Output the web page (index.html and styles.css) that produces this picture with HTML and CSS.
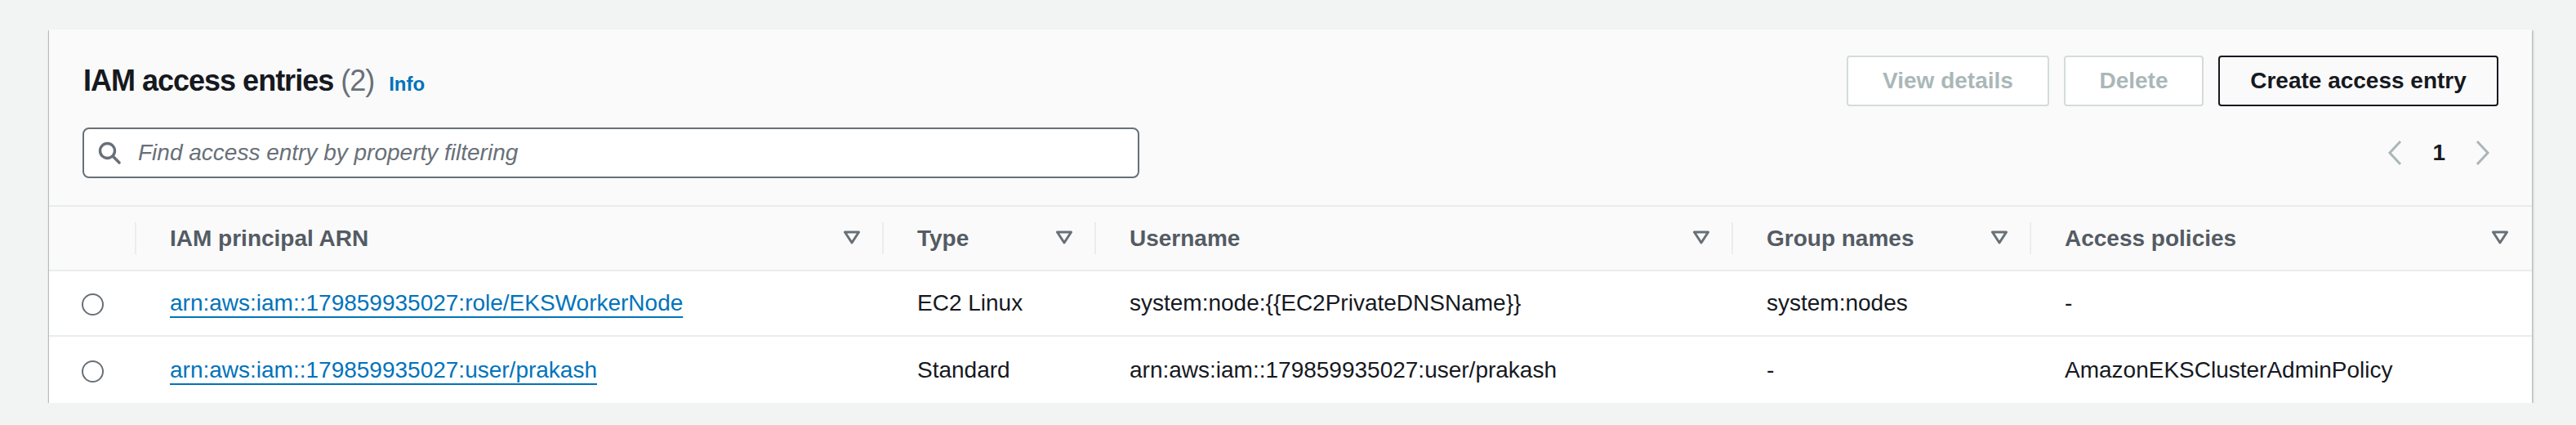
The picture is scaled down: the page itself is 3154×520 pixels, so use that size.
FILE: index.html
```html
<!DOCTYPE html>
<html lang="en">
<head>
<meta charset="utf-8">
<title>IAM access entries</title>
<link rel="stylesheet" href="styles.css">
</head>
<body>
<div class="container">
  <div class="header">
    <div class="header-top">
      <h2 class="title">IAM access entries <span class="count">(2)</span><a class="info" href="#">Info</a></h2>
      <div class="actions">
        <button class="btn btn-view" disabled>View details</button>
        <button class="btn btn-delete" disabled>Delete</button>
        <button class="btn btn-create">Create access entry</button>
      </div>
    </div>
    <div class="header-bottom">
      <div class="search">
        <svg class="search-icon" width="30" height="30" viewBox="0 0 30 30"><circle cx="12.5" cy="12.5" r="9" fill="none" stroke="#687078" stroke-width="3.4"/><line x1="19" y1="19" x2="27" y2="27" stroke="#687078" stroke-width="3.6" stroke-linecap="round"/></svg>
        <span class="placeholder">Find access entry by property filtering</span>
      </div>
      <div class="pagination">
        <svg class="chev" width="18" height="32" viewBox="0 0 18 32"><polyline points="16,2 3,16 16,30" fill="none" stroke="#aab7b8" stroke-width="3"/></svg>
        <span class="page">1</span>
        <svg class="chev" width="18" height="32" viewBox="0 0 18 32"><polyline points="2,2 15,16 2,30" fill="none" stroke="#aab7b8" stroke-width="3"/></svg>
      </div>
    </div>
  </div>
  <table class="table">
    <colgroup>
      <col class="c0"><col class="c1"><col class="c2"><col class="c3"><col class="c4"><col class="c5">
    </colgroup>
    <thead>
      <tr>
        <th class="th-select"></th>
        <th><div class="th-inner"><span>IAM principal ARN</span><svg class="filter" width="22" height="17" viewBox="0 0 22 17"><polygon points="2.5,2 19.5,2 11,15" fill="none" stroke="#687078" stroke-width="3" stroke-linejoin="round"/></svg></div></th>
        <th><div class="th-inner"><span>Type</span><svg class="filter" width="22" height="17" viewBox="0 0 22 17"><polygon points="2.5,2 19.5,2 11,15" fill="none" stroke="#687078" stroke-width="3" stroke-linejoin="round"/></svg></div></th>
        <th><div class="th-inner"><span>Username</span><svg class="filter" width="22" height="17" viewBox="0 0 22 17"><polygon points="2.5,2 19.5,2 11,15" fill="none" stroke="#687078" stroke-width="3" stroke-linejoin="round"/></svg></div></th>
        <th><div class="th-inner"><span>Group names</span><svg class="filter" width="22" height="17" viewBox="0 0 22 17"><polygon points="2.5,2 19.5,2 11,15" fill="none" stroke="#687078" stroke-width="3" stroke-linejoin="round"/></svg></div></th>
        <th class="th-last"><div class="th-inner"><span>Access policies</span><svg class="filter" width="22" height="17" viewBox="0 0 22 17"><polygon points="2.5,2 19.5,2 11,15" fill="none" stroke="#687078" stroke-width="3" stroke-linejoin="round"/></svg></div></th>
      </tr>
    </thead>
    <tbody>
      <tr>
        <td class="td-select"><span class="radio"></span></td>
        <td><a class="link" href="#">arn:aws:iam::179859935027:role/EKSWorkerNode</a></td>
        <td>EC2 Linux</td>
        <td>system:node:{{EC2PrivateDNSName}}</td>
        <td>system:nodes</td>
        <td>-</td>
      </tr>
      <tr>
        <td class="td-select"><span class="radio"></span></td>
        <td><a class="link" href="#">arn:aws:iam::179859935027:user/prakash</a></td>
        <td>Standard</td>
        <td>arn:aws:iam::179859935027:user/prakash</td>
        <td>-</td>
        <td>AmazonEKSClusterAdminPolicy</td>
      </tr>
    </tbody>
  </table>
</div>
</body>
</html>
```
FILE: styles.css
```css
html, body {
  margin: 0;
  padding: 0;
  background: #f2f3f3;
}
body {
  padding: 36px 0 0 60px;
  font-family: "Liberation Sans", Arial, sans-serif;
  color: #16191f;
}
.container {
  width: 3040px;
  background: #ffffff;
  box-shadow: 0 2px 2px 0 rgba(0, 28, 36, 0.35), 2px 1px 2px 0 rgba(0, 28, 36, 0.15), -1px 1px 1px 0 rgba(0, 28, 36, 0.15);
}
.header {
  background: #fafafa;
  padding: 32px 41px 33px 41px;
  border-bottom: 2px solid #eaeded;
}
.header-top {
  display: flex;
  align-items: center;
  justify-content: space-between;
  height: 62px;
}
.title {
  margin: 0 0 0 1px;
  font-size: 36px;
  font-weight: 700;
  letter-spacing: -1px;
  color: #16191f;
  display: flex;
  align-items: baseline;
  white-space: pre;
}
.count {
  font-weight: 400;
  color: #687078;
}
.info {
  margin-left: 18px;
  font-size: 24px;
  font-weight: 700;
  letter-spacing: 0;
  color: #0073bb;
  text-decoration: none;
}
.actions {
  display: flex;
  gap: 18px;
}
.btn {
  box-sizing: border-box;
  height: 62px;
  border-radius: 4px;
  font-family: "Liberation Sans", Arial, sans-serif;
  font-size: 28px;
  font-weight: 700;
  padding: 0;
  background: #ffffff;
  text-align: center;
}
.btn-view { width: 248px; }
.btn-delete { width: 171px; }
.btn-create { width: 343px; }
.btn[disabled] {
  border: 2px solid #d5dbdb;
  color: #aab7b8;
}
.btn-create {
  border: 2px solid #16191f;
  color: #16191f;
  background: #fafafa;
}
.header-bottom {
  margin-top: 26px;
  display: flex;
  align-items: center;
  justify-content: space-between;
  height: 62px;
}
.search {
  box-sizing: border-box;
  width: 1294px;
  height: 62px;
  border: 2px solid #687078;
  border-radius: 8px;
  background: #ffffff;
  display: flex;
  align-items: center;
  padding-left: 16px;
}
.search-icon {
  flex: none;
}
.placeholder {
  margin-left: 20px;
  font-size: 28px;
  font-style: italic;
  color: #687078;
}
.pagination {
  display: flex;
  align-items: center;
  gap: 37px;
  margin-right: 10px;
}
.page {
  font-size: 28px;
  font-weight: 700;
  color: #16191f;
}
.table {
  width: 3040px;
  table-layout: fixed;
  border-collapse: collapse;
  font-size: 28px;
}
.c0 { width: 107px; }
.c1 { width: 915px; }
.c2 { width: 260px; }
.c3 { width: 780px; }
.c4 { width: 365px; }
.c5 { width: 613px; }
thead tr {
  background: #fafafa;
  height: 78px;
  border-bottom: 2px solid #eaeded;
}
th {
  padding: 0;
  text-align: left;
  font-weight: 700;
  color: #545b64;
  position: relative;
}
th::after {
  content: "";
  position: absolute;
  right: 0;
  top: 19px;
  bottom: 19px;
  width: 2px;
  background: #eaeded;
}
th.th-last::after {
  display: none;
}
.th-inner {
  display: flex;
  align-items: center;
  justify-content: space-between;
  padding: 0 28px 0 41px;
}
th.th-last .th-inner {
  padding-right: 28px;
}
.filter {
  flex: none;
  margin-top: -2px;
}
tbody tr {
  height: 80px;
  border-bottom: 2px solid #eaeded;
}
tbody tr:last-child {
  border-bottom: none;
  height: 82px;
}
td {
  padding: 0 0 0 41px;
  color: #16191f;
  white-space: nowrap;
}
td.td-select {
  padding: 0;
  text-align: center;
}
.radio {
  display: inline-block;
  vertical-align: middle;
  box-sizing: border-box;
  width: 27px;
  height: 27px;
  border: 2.5px solid #687078;
  border-radius: 50%;
}
.link {
  color: #0073bb;
  text-decoration: underline;
  text-decoration-thickness: 2px;
  text-underline-offset: 7px;
}
```
